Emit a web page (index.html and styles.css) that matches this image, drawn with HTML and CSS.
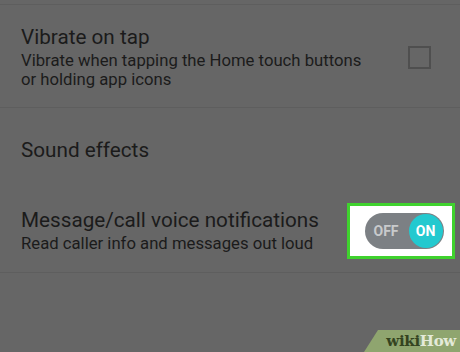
FILE: index.html
```html
<!DOCTYPE html>
<html>
<head>
<meta charset="utf-8">
<link rel="stylesheet" href="styles.css">
</head>
<body>
<div class="screen">
  <div class="top-line"></div>
  <div class="row row-vibrate">
    <div class="texts">
      <div class="title">Vibrate on tap</div>
      <div class="sub">Vibrate when tapping the Home touch buttons<br>or holding app icons</div>
    </div>
    <div class="checkbox"></div>
  </div>
  <div class="row row-sound">
    <div class="texts">
      <div class="title">Sound effects</div>
    </div>
  </div>
  <div class="row row-voice">
    <div class="texts">
      <div class="title">Message/call voice notifications</div>
      <div class="sub">Read caller info and messages out loud</div>
    </div>
    <div class="highlight">
      <div class="toggle">
        <span class="off">OFF</span>
        <span class="knob">ON</span>
      </div>
    </div>
  </div>
  <div class="watermark"><span class="wiki">wiki</span><span class="how">How</span></div>
</div>
</body>
</html>
```
FILE: styles.css
```css
html, body {
  margin: 0;
  padding: 0;
}
.screen {
  position: relative;
  width: 460px;
  height: 352px;
  background: #666666;
  overflow: hidden;
  font-family: Roboto, "Liberation Sans", sans-serif;
  color: #1b1b1b;
}
.top-line {
  height: 4px;
  border-bottom: 1px solid #5e5e5e;
}
.row {
  display: flex;
  align-items: center;
  padding-left: 21px;
  border-bottom: 1px solid #5e5e5e;
  box-sizing: border-box;
}
.row-vibrate {
  height: 103px;
  padding-top: 2px;
}
.row-sound {
  height: 84px;
  border-bottom: none;
}
.row-voice {
  height: 81px;
  padding-bottom: 2px;
}
.texts {
  flex: 1;
}
.title {
  font-size: 20.7px;
  line-height: 24px;
}
.sub {
  font-size: 16.7px;
  line-height: 19.5px;
  margin-top: 2px;
}
.checkbox {
  width: 19px;
  height: 19px;
  border: 2px solid #4f4f4f;
  margin-right: 29px;
}
.highlight {
  width: 102px;
  height: 50px;
  border: 3px solid #3fd22e;
  background: #ffffff;
  margin-right: 5px;
  display: flex;
  align-items: center;
  justify-content: center;
}
.toggle {
  width: 79px;
  height: 36px;
  border-radius: 18px;
  background: #7c8084;
  display: flex;
  align-items: center;
  justify-content: space-between;
  box-sizing: border-box;
  padding-left: 9px;
  padding-right: 1px;
  margin-left: 6px;
  font-weight: bold;
  font-size: 14px;
}
.off {
  color: #c8cacc;
}
.knob {
  width: 34px;
  height: 34px;
  border-radius: 50%;
  background: #23c9cf;
  color: #ffffff;
  display: flex;
  align-items: center;
  justify-content: center;
}
.watermark {
  position: absolute;
  right: 0;
  bottom: 0;
  width: 96px;
  height: 22px;
  background: #8fa56f;
  clip-path: polygon(14px 0, 100% 0, 100% 100%, 0 100%);
  display: flex;
  align-items: center;
  justify-content: flex-end;
  padding-right: 4px;
  box-sizing: border-box;
  font-family: "DejaVu Serif", "Liberation Serif", serif;
  font-weight: bold;
  font-size: 15px;
  letter-spacing: -0.3px;
}
.wiki {
  color: #34431f;
}
.how {
  color: #e4ead9;
}
```
